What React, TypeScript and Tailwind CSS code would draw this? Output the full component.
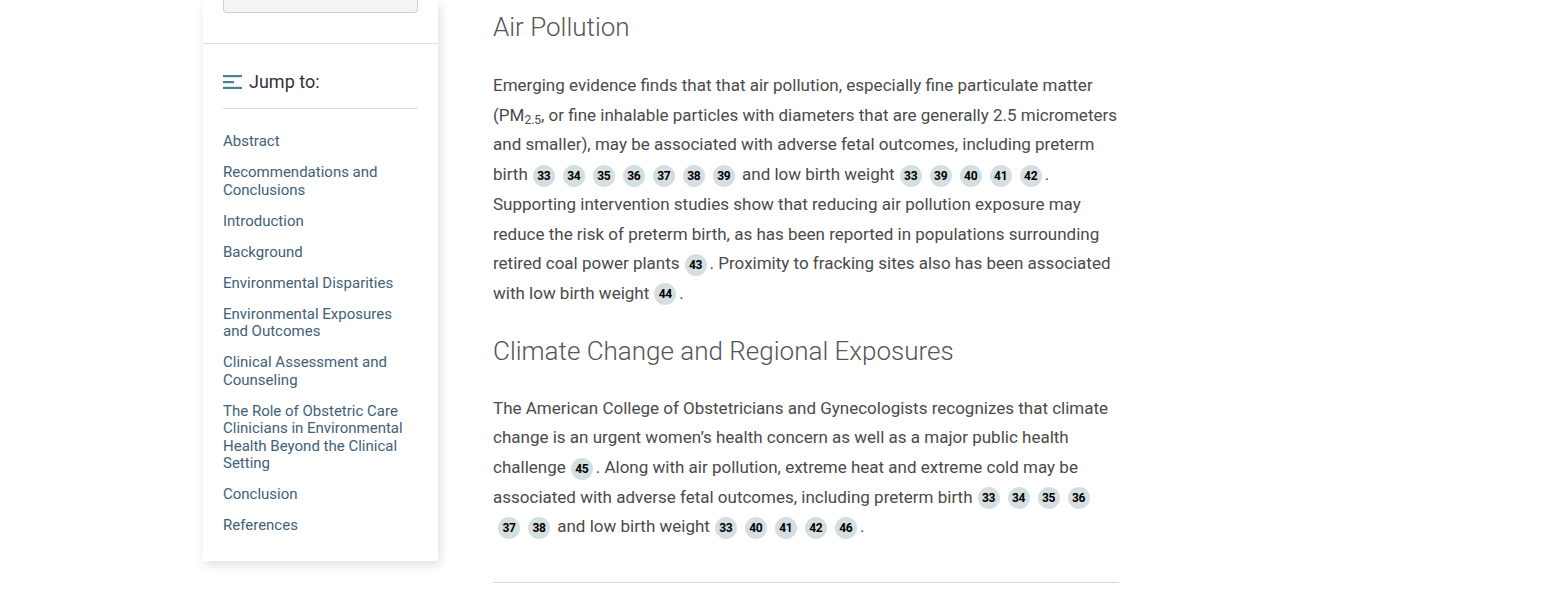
import React from "react";

const links = [
  "Abstract",
  "Recommendations and Conclusions",
  "Introduction",
  "Background",
  "Environmental Disparities",
  "Environmental Exposures and Outcomes",
  "Clinical Assessment and Counseling",
  "The Role of Obstetric Care Clinicians in Environmental Health Beyond the Clinical Setting",
  "Conclusion",
  "References",
];

function Refs({ nums }: { nums: number[] }) {
  return (
    <>
      {nums.map((n, i) => (
        <span
          key={i}
          className="ml-[5px] mr-[3px] inline-flex h-[22px] w-[22px] items-center justify-center rounded-full bg-[#d5dfe2] align-middle text-[12px] font-bold leading-none text-black tracking-[-0.3px]"
        >
          {n}
        </span>
      ))}
    </>
  );
}

function JumpIcon() {
  return (
    <svg width="19" height="14" viewBox="0 0 19 14" className="shrink-0">
      <rect x="0" y="0" width="19" height="2.2" fill="#4b8190" />
      <rect x="0" y="6" width="11" height="2.2" fill="#4b8190" />
      <rect x="0" y="11.8" width="19" height="2.2" fill="#4b8190" />
    </svg>
  );
}

export default function App() {
  return (
    <div className="min-h-[590px] bg-white font-['Roboto','Liberation_Sans',sans-serif]">
      <div className="flex items-start gap-[55px] pl-[203px]">
        {/* sidebar */}
        <aside className="w-[235px] shrink-0 bg-white shadow-[2px_4px_10px_rgba(0,0,0,0.13)]">
          <div className="px-5 pb-[30px]">
            <div className="h-[13px] rounded-b-[4px] border border-t-0 border-[#cfcfcf] bg-[#f4f4f4]" />
          </div>
          <div className="border-t border-[#dedede] px-5 pt-[26px] pb-[26px]">
            <div className="flex items-center gap-[7px] pb-[14px]">
              <JumpIcon />
              <span className="text-[18px] leading-[24px] text-[#333]">Jump to:</span>
            </div>
            <div className="border-t border-[#dcdcdc]" />
            <ul className="flex flex-col gap-[13.5px] pt-[24px]">
              {links.map((l) => (
                <li key={l} className="text-[15px] leading-[17.5px] text-[#3f6179]">
                  {l}
                </li>
              ))}
            </ul>
          </div>
        </aside>

        {/* article */}
        <main className="w-[626px] text-[17px] leading-[29.7px] text-[#4a4a4a]">
          <h2 className="pt-[12px] text-[26px] font-light leading-[31px] text-[#555]">Air Pollution</h2>
          <p className="mt-[28px]">
            Emerging evidence finds that that air pollution, especially fine particulate matter (PM
            <sub className="text-[12px]">2.5</sub>, or fine inhalable particles with diameters that are generally 2.5
            micrometers and smaller), may be associated with adverse fetal outcomes, including preterm birth
            <Refs nums={[33, 34, 35, 36, 37, 38, 39]} />
            {" "}and low birth weight
            <Refs nums={[33, 39, 40, 41, 42]} />. Supporting intervention studies show that reducing air pollution
            exposure may reduce the risk of preterm birth, as has been reported in populations surrounding retired
            coal power plants
            <Refs nums={[43]} />. Proximity to fracking sites also has been associated with low birth weight
            <Refs nums={[44]} />.
          </p>
          <h2 className="mt-[27px] text-[26px] font-light leading-[31px] text-[#555]">
            Climate Change and Regional Exposures
          </h2>
          <p className="mt-[27px]">
            The American College of Obstetricians and Gynecologists recognizes that climate change is an urgent
            women’s health concern as well as a major public health challenge
            <Refs nums={[45]} />. Along with air pollution, extreme heat and extreme cold may be associated with
            adverse fetal outcomes, including preterm birth
            <Refs nums={[33, 34, 35, 36, 37, 38]} />
            {" "}and low birth weight
            <Refs nums={[33, 40, 41, 42, 46]} />.
          </p>
          <div className="mt-[40px] border-t border-[#d6dadc]" />
        </main>
      </div>
    </div>
  );
}
